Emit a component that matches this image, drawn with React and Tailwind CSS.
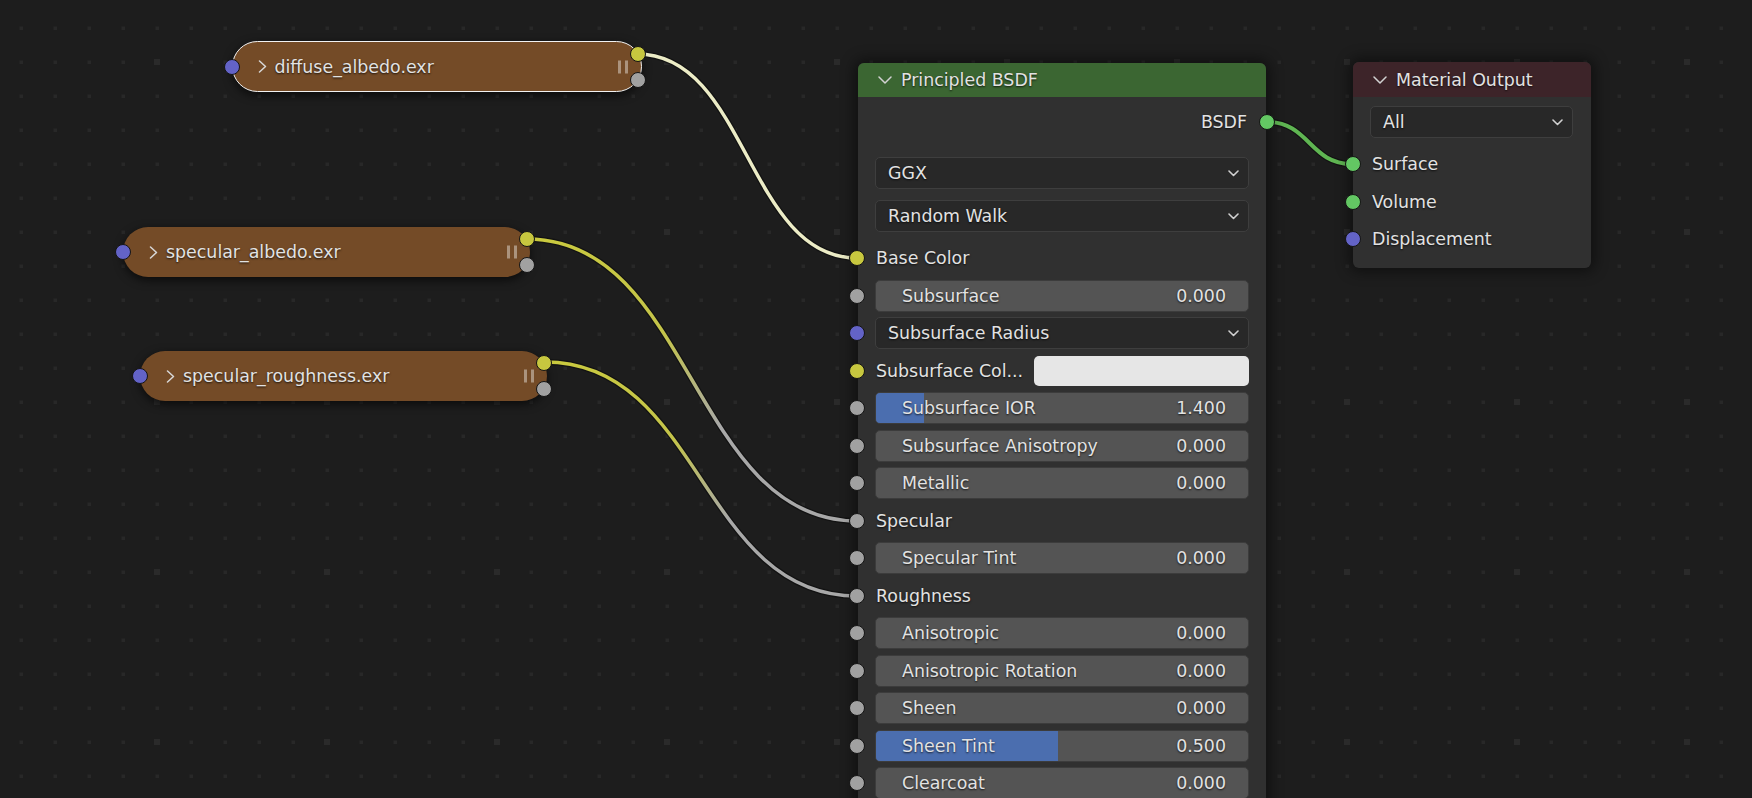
import React from 'react';

const FONT = "font-['DejaVu_Sans','Liberation_Sans',sans-serif] text-[17.4px] leading-[20px] text-[#e2e2e2] [text-shadow:0_1px_2px_rgba(0,0,0,0.75)]";

const socketColors = {
  yellow: 'bg-[#c7c73f]',
  grey: 'bg-[#a1a1a1]',
  blue: 'bg-[#6363c7]',
  green: 'bg-[#63c763]',
};

const Socket = ({ color, className }) => (
  <span className={`absolute w-[16px] h-[16px] rounded-full border-[1.5px] border-[#141414] ${socketColors[color]} ${className}`} />
);

const ChevronDown = ({ className }) => (
  <svg width="14" height="8" viewBox="0 0 14 8" className={className}>
    <polyline points="1,1 7,7 13,1" fill="none" stroke="#d2d2d2" strokeWidth="1.5" strokeLinecap="round" strokeLinejoin="round" />
  </svg>
);

const SmallChevron = () => (
  <svg width="11" height="7" viewBox="0 0 11 7">
    <polyline points="1,1 5.5,5.5 10,1" fill="none" stroke="#d0d0d0" strokeWidth="1.6" strokeLinecap="round" strokeLinejoin="round" />
  </svg>
);

const ChevronRight = () => (
  <svg width="9" height="13" viewBox="0 0 9 13">
    <polyline points="1.5,1 7.5,6.5 1.5,12" fill="none" stroke="#d8d8d8" strokeWidth="1.5" strokeLinecap="round" strokeLinejoin="round" />
  </svg>
);

const Dropdown = ({ label }) => (
  <div className="flex-1 h-[32px] rounded-[5px] bg-[#282828] border border-[#3e3e3e] flex items-center justify-between pl-[12px] pr-[9px]">
    <span>{label}</span>
    <SmallChevron />
  </div>
);

const bsdfRows = [
  { type: 'label', label: 'Base Color', socket: 'yellow' },
  { type: 'value', label: 'Subsurface', value: '0.000', socket: 'grey' },
  { type: 'menu', label: 'Subsurface Radius', socket: 'blue' },
  { type: 'color', label: 'Subsurface Col...', socket: 'yellow' },
  { type: 'value', label: 'Subsurface IOR', value: '1.400', fill: 13, socket: 'grey' },
  { type: 'value', label: 'Subsurface Anisotropy', value: '0.000', socket: 'grey' },
  { type: 'value', label: 'Metallic', value: '0.000', socket: 'grey' },
  { type: 'label', label: 'Specular', socket: 'grey' },
  { type: 'value', label: 'Specular Tint', value: '0.000', socket: 'grey' },
  { type: 'label', label: 'Roughness', socket: 'grey' },
  { type: 'value', label: 'Anisotropic', value: '0.000', socket: 'grey' },
  { type: 'value', label: 'Anisotropic Rotation', value: '0.000', socket: 'grey' },
  { type: 'value', label: 'Sheen', value: '0.000', socket: 'grey' },
  { type: 'value', label: 'Sheen Tint', value: '0.500', fill: 49, socket: 'grey' },
  { type: 'value', label: 'Clearcoat', value: '0.000', socket: 'grey' },
];

const BsdfRow = ({ row }) => (
  <div className="relative flex items-center h-[37.5px] px-[17px]">
    <Socket color={row.socket} className="left-[-9px] top-1/2 -translate-y-1/2" />
    {row.type === 'label' && <span className="pl-[1px]">{row.label}</span>}
    {row.type === 'menu' && <Dropdown label={row.label} />}
    {row.type === 'color' && (
      <>
        <span className="w-[159px] pl-[1px]">{row.label}</span>
        <div className="flex-1 h-[30px] rounded-[5px] bg-[#e6e6e6]" />
      </>
    )}
    {row.type === 'value' && (
      <div className="relative flex-1 h-[32px] rounded-[5px] bg-[#545454] border border-[#3c3c3c] overflow-hidden flex items-center justify-between pl-[26px] pr-[22px]">
        {row.fill && <div className="absolute inset-y-0 left-0 bg-[#4b6eaf]" style={{ width: `${row.fill}%` }} />}
        <span className="relative">{row.label}</span>
        <span className="relative">{row.value}</span>
      </div>
    )}
  </div>
);

const CollapsedNode = ({ name, className, selected }) => (
  <div
    className={`absolute h-[50px] rounded-full bg-[#744b27] shadow-[0_3px_10px_rgba(0,0,0,0.65)] flex items-center gap-[8px] ${selected ? 'border-[1.5px] border-[#f2f2f2] pl-[24.5px]' : 'pl-[26px]'} ${className}`}
  >
    <ChevronRight />
    <span>{name}</span>
    <div className="absolute right-[13px] top-1/2 -translate-y-1/2 flex gap-[4px]">
      <span className="w-[3px] h-[13px] bg-white/40" />
      <span className="w-[3px] h-[13px] bg-white/40" />
    </div>
    <Socket color="blue" className={`${selected ? 'left-[-9.5px]' : 'left-[-8px]'} top-1/2 -translate-y-1/2`} />
    <Socket color="yellow" className="right-[-5px] top-[4px]" />
    <Socket color="grey" className="right-[-5px] top-[30px]" />
  </div>
);

const Wire = ({ x1, y1, x2, y2, stroke, width = 3.5, outline = 6 }) => {
  const d = (x2 - x1) * 0.5;
  const path = `M ${x1} ${y1} C ${x1 + d} ${y1}, ${x2 - d} ${y2}, ${x2} ${y2}`;
  return (
    <g>
      <path d={path} fill="none" stroke="#101010" strokeOpacity="0.85" strokeWidth={outline} />
      <path d={path} fill="none" stroke={stroke} strokeWidth={width} />
    </g>
  );
};

export default function App() {
  return (
    <div className={`relative w-[1752px] h-[798px] overflow-hidden bg-[#1d1d1d] ${FONT}`}>
      <svg className="absolute inset-0" width="1752" height="798">
        <defs>
          <pattern id="minor" x="4" y="11" width="34" height="34" patternUnits="userSpaceOnUse">
            <rect x="15.5" y="15.5" width="3.5" height="3.5" fill="#282828" />
          </pattern>
          <pattern id="major" x="72" y="-23" width="170" height="170" patternUnits="userSpaceOnUse">
            <rect x="82" y="82" width="6" height="6" fill="#2a2a2a" />
          </pattern>
          <linearGradient id="specLink" gradientUnits="userSpaceOnUse" x1="527" y1="239" x2="857" y2="521">
            <stop offset="0" stopColor="#caca3e" />
            <stop offset="0.38" stopColor="#c4c44a" />
            <stop offset="0.62" stopColor="#a8a8a8" />
            <stop offset="1" stopColor="#a8a8a8" />
          </linearGradient>
          <linearGradient id="roughLink" gradientUnits="userSpaceOnUse" x1="545" y1="362" x2="857" y2="596">
            <stop offset="0" stopColor="#caca3e" />
            <stop offset="0.38" stopColor="#c4c44a" />
            <stop offset="0.62" stopColor="#a8a8a8" />
            <stop offset="1" stopColor="#a8a8a8" />
          </linearGradient>
        </defs>
        <rect width="1752" height="798" fill="url(#minor)" />
        <rect width="1752" height="798" fill="url(#major)" />
        <Wire x1={637} y1={54} x2={857} y2={258} stroke="#ececc6" />
        <Wire x1={527} y1={239} x2={857} y2={521} stroke="url(#specLink)" />
        <Wire x1={545} y1={362} x2={857} y2={596} stroke="url(#roughLink)" />
        <Wire x1={1267} y1={122} x2={1352} y2={164} stroke="#5fb552" width={4} outline={6.5} />
      </svg>

      <CollapsedNode name="diffuse_albedo.exr" selected className="left-[232px] top-[41px] w-[410px] h-[51px]" />
      <CollapsedNode name="specular_albedo.exr" className="left-[123px] top-[227px] w-[407px]" />
      <CollapsedNode name="specular_roughness.exr" className="left-[140px] top-[351px] w-[407px]" />

      {/* Principled BSDF */}
      <div className="absolute left-[858px] top-[63px] w-[408px] rounded-[6px] bg-[#303030] shadow-[0_0_14px_4px_rgba(0,0,0,0.45)]">
        <div className="h-[34px] rounded-t-[6px] bg-[#3b6632] flex items-center pl-[20px] gap-[9px]">
          <ChevronDown />
          <span>Principled BSDF</span>
        </div>
        <div className="relative mt-[6px] h-[38px] flex items-center justify-end pr-[19px]">
          <span>BSDF</span>
          <Socket color="green" className="right-[-9px] top-1/2 -translate-y-1/2" />
        </div>
        <div className="mt-[16px] px-[17px] flex">
          <Dropdown label="GGX" />
        </div>
        <div className="mt-[11px] px-[17px] flex">
          <Dropdown label="Random Walk" />
        </div>
        <div className="mt-[7.25px] pb-[10px]">
          {bsdfRows.map((row) => (
            <BsdfRow key={row.label} row={row} />
          ))}
        </div>
      </div>

      {/* Material Output */}
      <div className="absolute left-[1353px] top-[62px] w-[238px] rounded-[6px] bg-[#303030] shadow-[0_0_14px_4px_rgba(0,0,0,0.45)]">
        <div className="h-[35px] rounded-t-[6px] bg-[#3d2429] flex items-center pl-[20px] gap-[9px]">
          <ChevronDown />
          <span>Material Output</span>
        </div>
        <div className="mt-[9px] pl-[17px] pr-[18px] flex">
          <Dropdown label="All" />
        </div>
        <div className="mt-[7.25px] pb-[10px]">
          {[
            { label: 'Surface', socket: 'green' },
            { label: 'Volume', socket: 'green' },
            { label: 'Displacement', socket: 'blue' },
          ].map((s) => (
            <div key={s.label} className="relative h-[37.5px] flex items-center pl-[19px]">
              <Socket color={s.socket} className="left-[-8px] top-1/2 -translate-y-1/2" />
              <span>{s.label}</span>
            </div>
          ))}
        </div>
      </div>
    </div>
  );
}
